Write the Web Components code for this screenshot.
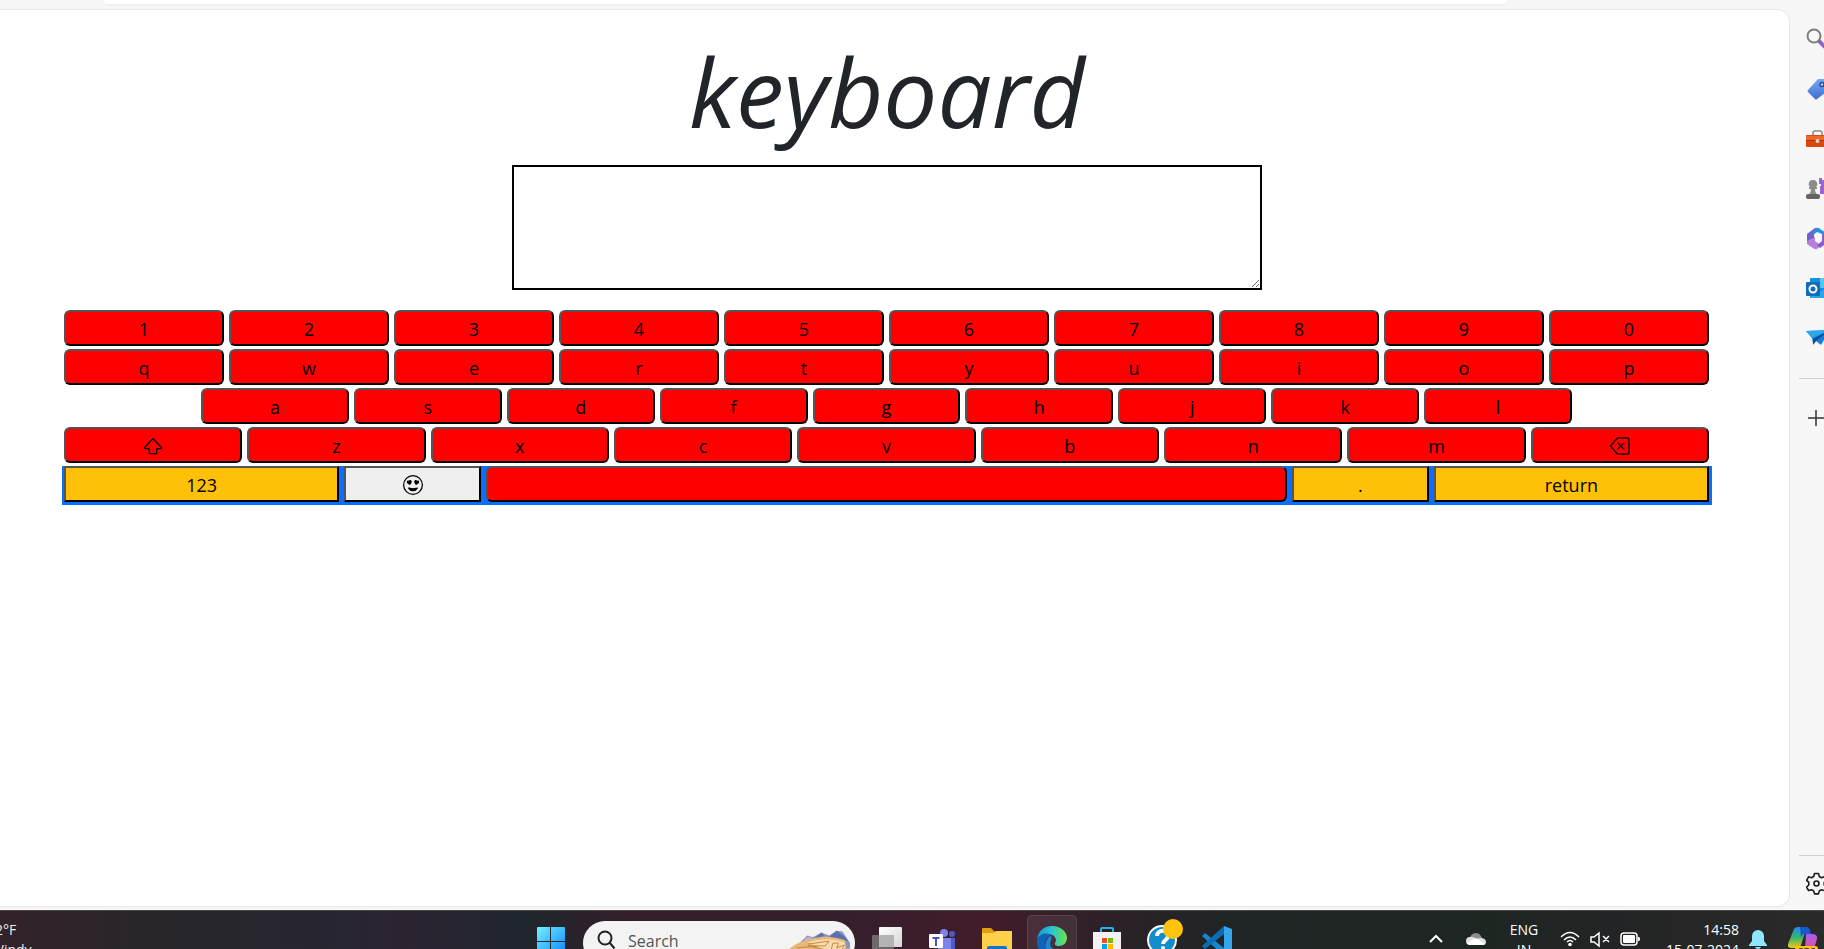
<!DOCTYPE html>
<html lang="en">
<head>
<meta charset="utf-8">
<title>keyboard</title>
<style>
html, body { margin: 0; height: 100%; overflow: hidden; }
body { font-family: "Open Sans", "Noto Sans", sans-serif; background: #f7f7f7; }
</style>
</head>
<body>
<desk-top>
  <browser-window>
    <virtual-keyboard></virtual-keyboard>
    <side-bar slot="side"></side-bar>
  </browser-window>
  <task-bar slot="bar"></task-bar>
</desk-top>
<script>
const ICONS = {
  shift: ['0 0 16 16', '<path fill="currentColor" d="M7.27 2.047a1 1 0 0 1 1.46 0l6.345 6.77c.6.638.146 1.683-.73 1.683H11.5v3a1 1 0 0 1-1 1h-5a1 1 0 0 1-1-1v-3H1.654C.78 10.5.326 9.455.924 8.816zM14.346 9.5 8 2.731 1.654 9.5H4.5a1 1 0 0 1 1 1v3h5v-3a1 1 0 0 1 1-1z"/>'],
  backspace: ['0 0 16 16', '<g fill="currentColor"><path d="M5.83 5.146a.5.5 0 0 0 0 .708L7.975 8l-2.147 2.146a.5.5 0 0 0 .707.708l2.147-2.147 2.146 2.147a.5.5 0 0 0 .707-.708L9.39 8l2.146-2.146a.5.5 0 0 0-.707-.708L8.683 7.293 6.536 5.146a.5.5 0 0 0-.707 0z"/><path d="M13.683 1a2 2 0 0 1 2 2v10a2 2 0 0 1-2 2h-7.08a2 2 0 0 1-1.519-.698L.241 8.65a1 1 0 0 1 0-1.302L5.084 1.7A2 2 0 0 1 6.603 1zm-7.08 1a1 1 0 0 0-.76.35L1 8l4.844 5.65a1 1 0 0 0 .759.35h7.08a1 1 0 0 0 1-1V3a1 1 0 0 0-1-1z"/></g>'],
  smile: ['0 0 16 16', '<g fill="currentColor"><path d="M8 15A7 7 0 1 1 8 1a7 7 0 0 1 0 14m0 1A8 8 0 1 0 8 0a8 8 0 0 0 0 16"/><path d="M11.315 10.014a.5.5 0 0 1 .548.736A4.5 4.5 0 0 1 7.965 13a4.5 4.5 0 0 1-3.898-2.25.5.5 0 0 1 .548-.736h.005l.017.005.067.015.252.055c.215.046.515.108.857.169.693.124 1.522.242 2.152.242s1.46-.118 2.152-.242a27 27 0 0 0 1.109-.224l.067-.015.017-.004.005-.002zM4.756 4.566c.763-1.424 4.02-.12.952 3.434-4.496-1.596-2.35-4.298-.952-3.434m6.488 0c1.398-.864 3.544 1.838-.952 3.434-3.067-3.554.19-4.858.952-3.434"/></g>'],

  find: ['0 0 24 24', '<circle cx="8" cy="9" r="6.5" fill="none" stroke="#7d7d7d" stroke-width="2"/><path d="M13 14l7 7" stroke="#9a5fd6" stroke-width="4"/><path d="M12.500 13.500l2 2" stroke="#777" stroke-width="2"/>'],
  tag: ['0 0 24 24', '<linearGradient id="g" x2="0" y2="1"><stop stop-color="#78a9f2"/><stop offset="1" stop-color="#3e6cd0"/></linearGradient><path d="M12 2h9l2 2v9L11 22q-1 1-2 0l-7-7q-1-1 0-2z" fill="url(#g)"/><circle cx="16" cy="7.500" r="2" fill="#b9cff8" stroke="#274b93" stroke-width="1.500"/>'],
  toolbox: ['0 0 24 24', '<path d="M7 8V6q0-2 2-2h5q2 0 2 2v2" fill="none" stroke="#8a8a8a" stroke-width="1.500"/><rect y="8" width="23" height="12" rx="1" fill="#d9480f"/><path d="M0 9h23v4H0z" fill="#ee6a2c"/><path d="M0 13h23v1H0z" fill="#a8350a"/><circle cx="11.500" cy="14" r="2" fill="#d4d4d4"/>'],
  chess: ['0 0 24 24', '<path d="M13 1h3v2h2V1h3v2h2V1h2v16H14V9h1V7h-2z" fill="#9b63d3"/><path d="M7 3a4 4 0 0 1 3 7h1v2H9q0 4 3 6H2q3-2 3-6H3v-2h1A4 4 0 0 1 7 3z" fill="#8b8b8b"/><rect y="17" width="14" height="5" rx="2" fill="#636363"/>'],
  m365: ['0 0 24 24', '<path d="M1 7l8-6 5 0-6 6v8l-4 4-3-3z" fill="#6c63cf"/><path d="M9 1q2-1 5 1l8 5v6l-6-4V7l-5-2-4 3z" fill="#2b8fe6"/><path d="M1 14l8-4v4l4 3 7-3-9 8q-2 1-4-1l-6-4z" fill="#b780dc"/><path d="M16 8h6v7l-8 6-3-3 5-4z" fill="#8c5bd0"/>'],
  outlook: ['0 0 24 24', '<rect x="4" y="1" width="20" height="20" rx="1" fill="#1490df"/><path d="M14 1h10v10H14z" fill="#50c8f0"/><path d="M5 19l19-9v11H5z" fill="#28a8ea"/><rect y="5" width="14" height="14" rx="1" fill="#0f6cbd"/><circle cx="7" cy="12" r="3.500" fill="none" stroke="#fff" stroke-width="2"/>'],
  send: ['0 0 24 24', '<path d="M0 4L24 3l-9 15-5-4-3 3-1-6z" fill="#1681d8"/><path d="M0 4l24-1L6 11z" fill="#29a9e8"/><path d="M24 3L7 12v6l3-4z" fill="#0b4b91"/>'],
  plus: ['0 0 24 24', '<path d="M2 11h16M10 3v16" stroke="#333" stroke-width="1.500"/>'],
  gear: ['0 0 24 24', '<g fill="none" stroke="#1b1b1b" stroke-width="1.600" stroke-linejoin="round"><path d="M8.500 1.500h4l.8 3 2.200 1.200 2.900-.9 2 3.500-2.200 2.100v2.600l2.200 2.100-2 3.500-2.900-.9-2.200 1.200-.8 3h-4l-.8-3-2.200-1.200-2.900.9-2-3.500 2.200-2.100v-2.600L.6 8.300l2-3.500 2.900.9 2.200-1.200z"/><circle cx="10.500" cy="11.500" r="2.500"/></g>'],

  windows: ['0 0 30 30', '<linearGradient id="g" x2="1" y2="1"><stop stop-color="#72f0ff"/><stop offset="1" stop-color="#0a84ff"/></linearGradient><path d="M1 2q0-1 1-1h12v14H1zM15 1h13q1 0 1 1v13H15zM1 16h13v14H1zM15 16h14v14H15z" fill="url(#g)"/>'],
  lens: ['0 0 20 20', '<circle cx="8" cy="8" r="6.500" fill="none" stroke="#222" stroke-width="2"/><path d="M12.500 12.500l5 6" stroke="#222" stroke-width="2.200"/>'],
  art: ['0 0 68 30', '<path d="M14 12l7-7 6 2 9-5 8 3 8-5 6 1 8 12v6H14z" fill="#8c94c4"/><path d="M28 9l8-7 4 5 5-1 7-6 8 6 4 5z" fill="#5c70ad"/><path d="M18 8l6-2 3 4-9 4z" fill="#bfaed0"/><path d="M0 22C6 13 20 9 38 6q16 1 23 4l1 20H0z" fill="#e8b878"/><path d="M22 12q20-6 38 0l2 9-24-1z" fill="#f9dcae"/><path d="M22 14l22-3-4 5-18 0 24 5 2-8 6 0-2 5 8-3-3 6 8-4M10 18l22-2m-18 6l14-2" fill="none" stroke="#c28444" stroke-width="1"/>'],
  taskview: ['0 0 30 30', '<linearGradient id="g" x2="1" y2="1"><stop stop-color="#fff"/><stop offset="1" stop-color="#d5d5d5"/></linearGradient><rect x="7" y="1" width="23" height="20" rx="1" fill="url(#g)"/><rect y="9" width="22" height="20" rx="1" fill="#777" fill-opacity=".85"/><rect x="7" y="9" width="15" height="12" fill="#b4b4b4"/>'],
  teams: ['0 0 30 30', '<circle cx="17" cy="7" r="4" fill="#7b83eb"/><circle cx="25" cy="8" r="3" fill="#5059c9"/><path d="M11 12h13v14q-6 6-13 2z" fill="#7b83eb"/><path d="M24 12h4v10q-1 4-4 3z" fill="#5059c9"/><rect x="2" y="8" width="14" height="14" rx="1" fill="#fff"/><path d="M5.500 12h7M9 12v8" stroke="#4b53bc" stroke-width="2"/>'],
  folder: ['0 0 30 30', '<path d="M0 3q0-1 1-1h8l4 4v6H0z" fill="#dfa00d"/><path d="M0 7h11l3-2h16v25H0z" fill="#ffd04a"/><path d="M5 22q0-2 2-2h16q2 0 2 2v8H5z" fill="#1373c9"/>'],
  edge: ['0 0 30 30', '<linearGradient id="g" x2="1"><stop stop-color="#1697dc"/><stop offset=".5" stop-color="#2cc3d2"/><stop offset="1" stop-color="#6ce443"/></linearGradient><path d="M0 14C1 5 7 0 15 0c9 0 15 6 15 12 0 5-4 8-8 8-3 0-5-1-4-3 3-5-2-9-7-9C6 8 2 10 0 14z" fill="url(#g)"/><path d="M0 14C2 8 9 6 14 9c-5 2-7 7-5 13 1 3 3 6 6 8C6 30-1 23 0 14z" fill="#0c63b7"/><path d="M11 12q-5 7 0 14 6 6 16-2-7 2-12-2-3-3-1-8 1-2 0-4-2 0-3 2z" fill="#1b84d3"/>'],
  store: ['0 0 30 30', '<path d="M9 6V3q0-1 1-1h10q1 0 1 1v3" fill="none" stroke="#25b4ea" stroke-width="2"/><path d="M1 6h28v24H1z" fill="#f2f2f2"/><path d="M10 12h5v5h-5z" fill="#f25022"/><path d="M16 12h5v5h-5z" fill="#7fba00"/><path d="M10 18h5v5h-5z" fill="#00a4ef"/><path d="M16 18h5v5h-5z" fill="#ffb900"/>'],
  help: ['0 0 36 36', '<circle cx="15" cy="21" r="14" fill="#138ecb" stroke="#fff" stroke-width="2"/><path d="M10 17c0-7 12-7 11 0 0 4-5 4-5 8" fill="none" stroke="#fff" stroke-width="4"/><circle cx="16" cy="29" r="2" fill="#fff"/><circle cx="26" cy="10" r="10" fill="#ffc20e"/>'],
  code: ['0 0 30 30', '<path d="M0 10l3-3 19 15v8z" fill="#1786ce"/><path d="M0 20L22 0v8L3 23z" fill="#0d6cb5"/><path d="M22 0l8 3v24l-8 3z" fill="#35a5ee"/>'],
  chevron: ['0 0 14 20', '<path d="M1 13l6-6 6 6" fill="none" stroke="#fff" stroke-width="2"/>'],
  cloud: ['0 0 20 20', '<path d="M4 9a6 6 0 0 1 11-2l2 4H4z" fill="#8e8e8e"/><path d="M4 16a4 4 0 0 1 0-8q3-1 6 2l4-1q6 0 6 4 0 3-3 3z" fill="#e0e0e0"/><path d="M1 14l9-5 9 6-2 1H4q-2 0-3-2z" fill="#fff"/>'],
  wifi: ['0 0 20 20', '<g fill="none" stroke="#fff" stroke-width="1.500"><path d="M1 8q9-9 18 0M4 11q6-6 12 0M7 13q3-3 6 0"/></g><circle cx="10" cy="15.500" r="1.800" fill="#fff"/>'],
  mute: ['0 0 20 20', '<g fill="none" stroke="#fff" stroke-width="1.500"><path d="M1 8h3l5-4v13l-5-4H1zM13 7l6 6M19 7l-6 6"/></g>'],
  battery: ['0 0 20 20', '<rect x="1" y="4" width="16" height="12" rx="3" fill="none" stroke="#fff" stroke-width="1.500"/><rect x="3" y="6" width="12" height="8" rx="1" fill="#fff"/><path d="M18 8h1q1 0 1 2t-1 2h-1z" fill="#fff"/>'],
  bell: ['0 0 18 20', '<path d="M9 1a6 6 0 0 1 6 6v5l3 4v1H0v-1l3-4V7a6 6 0 0 1 6-6zM6 18h6q-1 2-3 2t-3-2z" fill="#8fe6ff"/>'],
  copilot: ['0 0 30 30', '<linearGradient id="g" x2="0" y2="1"><stop stop-color="#1d8cf0"/><stop offset=".5" stop-color="#35b56d"/><stop offset="1" stop-color="#f5c516"/></linearGradient><linearGradient id="h" x2="0" y2="1"><stop stop-color="#a85cf0"/><stop offset="1" stop-color="#f0508a"/></linearGradient><path d="M6 3q1-2 4-2h9l-6 18q-1 3-4 3H3q-4 0-3-4z" fill="url(#g)"/><path d="M12 1h6q3 0 4 3l1 4h-6q-3 0-4 3z" fill="#1858d0"/><path d="M18 8h7q5 1 4 5l-3 10q-1 3-4 3h-9q3-1 4-4z" fill="url(#h)"/><rect x="7" y="20" width="23" height="12" rx="3" fill="#ffc20e"/><path d="M11 23h3v3h-3v4M17 30v-7h3v3h-3m2 0l2 4M27 23h-3v7" fill="none" stroke="#222" stroke-width="1.500"/>']
};

class UiIcon extends HTMLElement {
  connectedCallback() {
    if (this.shadowRoot) return;
    const [box, body] = ICONS[this.getAttribute('name')];
    this.attachShadow({ mode: 'open' }).innerHTML = `
      <style>:host{display:block;flex:none;width:var(--w,20px);height:var(--h,20px)} svg{display:block;width:100%;height:100%}</style>
      <svg viewBox="${box}" aria-hidden="true">${body}</svg>`;
  }
}
customElements.define('ui-icon', UiIcon);

class DeskTop extends HTMLElement {
  constructor() {
    super();
    this.attachShadow({ mode: 'open' }).innerHTML = `
      <style>:host{display:grid;grid-template-rows:minmax(0,1fr) 39px;height:100vh;overflow:hidden}</style>
      <slot></slot><slot name="bar"></slot>`;
  }
}
customElements.define('desk-top', DeskTop);

class BrowserWindow extends HTMLElement {
  constructor() {
    super();
    this.attachShadow({ mode: 'open' }).innerHTML = `
      <style>
        :host{display:grid;grid-template:10px minmax(0,1fr) / minmax(0,1fr) 35px;background:#f7f7f7;overflow:hidden}
        .address{height:4px;margin:0 282px 0 104px;background:#fff;border-radius:0 0 16px 16px;box-shadow:0 2px 2px #eee}
        main{grid-area:2/1;background:#fff;border-radius:0 12px 12px 0;box-shadow:0 0 1px 1px #e6e6e6;margin-bottom:4px}
        .side{grid-area:1/2/3/3;overflow:hidden}
      </style>
      <div class="address"></div><main><slot></slot></main><div class="side"><slot name="side"></slot></div>`;
  }
}
customElements.define('browser-window', BrowserWindow);

class SideBar extends HTMLElement {
  constructor() {
    super();
    const item = (n, l) => `<button aria-label="${l}"><ui-icon name="${n}"></ui-icon></button>`;
    this.attachShadow({ mode: 'open' }).innerHTML = `
      <style>
        :host{display:flex;flex-direction:column;height:100%;box-sizing:border-box;padding:14px 0 1px;--w:24px;--h:24px}
        button{display:flex;align-items:center;height:50px;flex:none;padding:0 0 0 17px;border:0;background:none}
        hr{width:100%;height:1px;box-sizing:border-box;margin:0 0 3px 10px;border:0;background:#cfcfcf;flex:none}
        nav{display:flex;flex-direction:column;flex:1}
        .first{margin-top:14px;margin-bottom:15px}
      </style>
      <nav aria-label="Sidebar">
        ${item('find', 'Find')}${item('tag', 'Shopping')}${item('toolbox', 'Tools')}${item('chess', 'Games')}
        ${item('m365', 'Microsoft 365')}${item('outlook', 'Outlook')}${item('send', 'Drop')}
        <hr class="first">${item('plus', 'Customize')}
      </nav>
      <hr>${item('gear', 'Settings')}`;
  }
}
customElements.define('side-bar', SideBar);

class KeyCap extends HTMLElement {
  constructor() {
    super();
    this.attachShadow({ mode: 'open' }).innerHTML = `
      <style>
        :host{display:block;min-width:0}
        button{display:flex;align-items:center;justify-content:center;width:100%;height:36px;box-sizing:border-box;padding:1px 0 0;
          border:2px outset #000;border-radius:6px;background:red;color:#000;font:18px/30px "Open Sans","Noto Sans",sans-serif}
        :host([tone]) button{border-radius:0}
        :host([tone=warning]) button{background:#ffc107}
        :host([tone=plain]) button{background:#efefef}
      </style>
      <button><slot></slot></button>`;
  }
  connectedCallback() {
    const label = this.getAttribute('label');
    if (label) this.shadowRoot.querySelector('button').setAttribute('aria-label', label);
  }
}
customElements.define('key-cap', KeyCap);

class VirtualKeyboard extends HTMLElement {
  constructor() {
    super();
    const keys = s => [...s].map(c => `<key-cap>${c}</key-cap>`).join('');
    this.attachShadow({ mode: 'open' }).innerHTML = `
      <style>
        :host{display:block;padding:16px 77px 0 62px;text-align:center}
        h1{margin:0;padding-bottom:10px;color:#212529;font:italic 400 96px/129px "Open Sans","Noto Sans",sans-serif}
        textarea{display:block;box-sizing:border-box;width:750px;max-width:100%;height:125px;margin:0 auto 20px;padding:2px;
          border:2px solid #000;background:#fff;resize:both;font:18px/24px "Open Sans","Noto Sans",sans-serif}
        .row{display:grid;grid-auto-flow:column;grid-auto-columns:minmax(0,1fr);column-gap:5px;padding:0 3px 3px 2px}
        .inset{padding-left:139px;padding-right:140px}
        .last{grid-template-columns:275fr 137fr 800fr 137fr 275fr;background:#0d6efd}
      </style>
      <h1>keyboard</h1>
      <textarea aria-label="Typed text"></textarea>
      <div class="row">${keys('1234567890')}</div>
      <div class="row">${keys('qwertyuiop')}</div>
      <div class="row inset">${keys('asdfghjkl')}</div>
      <div class="row"><key-cap label="Shift"><ui-icon name="shift"></ui-icon></key-cap>${keys('zxcvbnm')}<key-cap label="Backspace"><ui-icon name="backspace"></ui-icon></key-cap></div>
      <div class="row last"><key-cap tone="warning">123</key-cap><key-cap tone="plain" label="Emoji"><ui-icon name="smile"></ui-icon></key-cap><key-cap label="Space"></key-cap><key-cap tone="warning">.</key-cap><key-cap tone="warning">return</key-cap></div>`;
  }
}
customElements.define('virtual-keyboard', VirtualKeyboard);

class TaskBar extends HTMLElement {
  constructor() {
    super();
    const app = (n, l, c = '') => `<button class="app ${c}" aria-label="${l}"><ui-icon name="${n}"></ui-icon></button>`;
    this.attachShadow({ mode: 'open' }).innerHTML = `
      <style>
        :host{display:grid;grid-template-columns:526fr 716px 582fr;align-items:start;overflow:hidden;box-sizing:border-box;
          border-top:1px solid #4a4a4a;color:#fff;font-size:14px;line-height:20px;
          background:linear-gradient(90deg,#33222a,#28262a 8%,#272630 18%,#2b2430 22%,#1f262d 29%,#331f2b 34%,#351f2c 46%,#421c2c 54%,#2c2128 61%,#202525 67%,#1e2622 82%,#232425 88%,#2a2a2a)}
        .weather{display:flex;flex-direction:column;margin-left:-9px;padding-top:9px;color:#eee}
        .temp{margin-left:4px}
        .apps,.tray{display:flex}
        .apps{gap:5px;padding-top:4px}
        .app{display:flex;justify-content:center;width:50px;height:50px;flex:none;box-sizing:border-box;padding:10px 0 0;border:1px solid transparent;border-radius:5px;background:none;--w:30px;--h:30px}
        .active{background:#ffffff14;border-color:#ffffff18}
        .help{padding:3px 0 0 6px;--w:36px;--h:36px}
        .search{display:flex;width:272px;height:44px;margin:6px 2px 0;box-sizing:border-box;padding:9px 3px 0 14px;border-radius:22px;background:#f3f3f3;overflow:hidden;gap:11px}
        input{flex:1;min-width:0;height:22px;padding:0;border:0;outline:0;background:none;font:16px/22px "Open Sans","Noto Sans",sans-serif;color:#555}
        input::placeholder{color:#555;opacity:1}
        .art{--w:65px;--h:30px}
        .tray{justify-content:flex-end;padding:9px 6px 0 0}
        .tray ui-icon{margin-top:9px}
        .lang{width:30px;margin:0 21px 0 23px;text-align:center}
        .clock{width:78px;margin:0 10px 0 21px;text-align:right}
        .quick{display:flex;gap:10px}
        .chev{--w:14px;margin-right:23px}
        .bell{--w:18px;margin-right:21px}
        .tray .copilot{--w:30px;--h:30px;margin-top:6px}
      </style>
      <div class="weather"><div class="temp">2°F</div><div>Windy</div></div>
      <div class="apps">
        ${app('windows', 'Start')}
        <label class="search"><ui-icon name="lens"></ui-icon><input type="text" placeholder="Search" aria-label="Search"><ui-icon class="art" name="art"></ui-icon></label>
        ${app('taskview', 'Task view')}${app('teams', 'Teams')}${app('folder', 'File Explorer')}${app('edge', 'Edge', 'active')}
        ${app('store', 'Store')}${app('help', 'Help', 'help')}${app('code', 'Code')}
      </div>
      <div class="tray">
        <ui-icon class="chev" name="chevron"></ui-icon><ui-icon name="cloud"></ui-icon>
        <div class="lang"><div>ENG</div><div>IN</div></div>
        <div class="quick"><ui-icon name="wifi"></ui-icon><ui-icon name="mute"></ui-icon><ui-icon name="battery"></ui-icon></div>
        <div class="clock"><div>14:58</div><div>15-07-2024</div></div>
        <ui-icon class="bell" name="bell"></ui-icon><ui-icon class="copilot" name="copilot"></ui-icon>
      </div>`;
  }
}
customElements.define('task-bar', TaskBar);
</script>
</body>
</html>
